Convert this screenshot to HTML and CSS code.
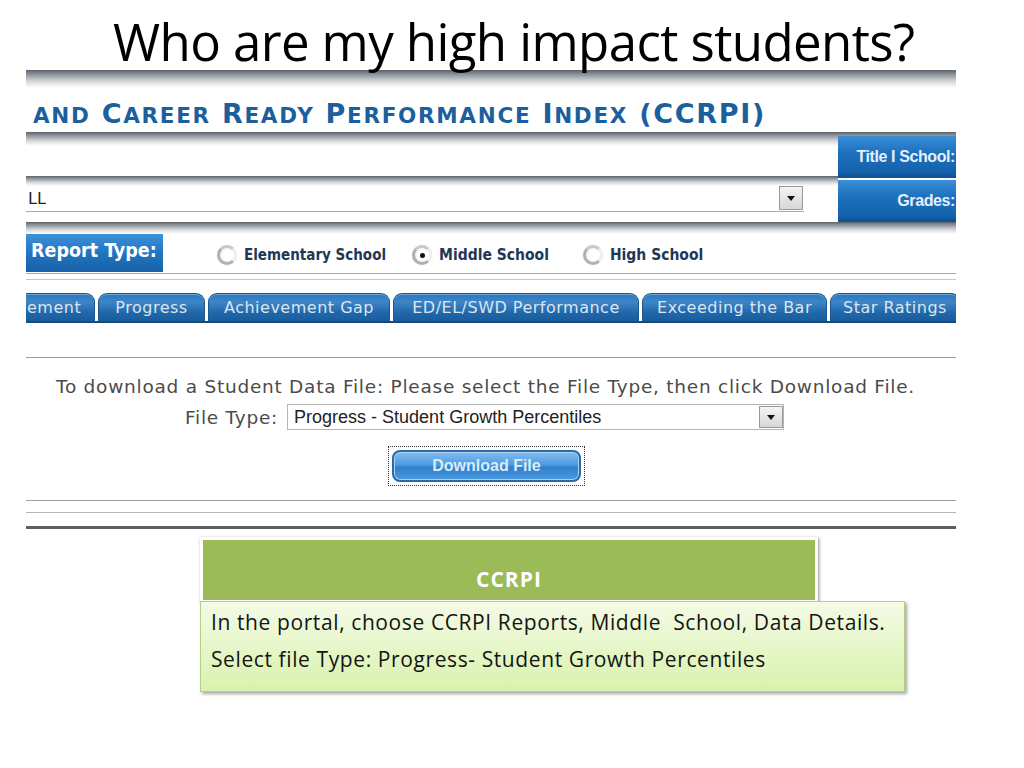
FILE: index.html
```html
<!DOCTYPE html>
<html>
<head>
<meta charset="utf-8">
<link rel="stylesheet" href="styles.css">
</head>
<body>
<h1 class="title">Who are my high impact students?</h1>
<div class="shot">
  <div class="gbar gbar-top"></div>
  <div class="brand"><span class="sc">and</span> C<span class="sc">areer</span> R<span class="sc">eady</span> P<span class="sc">erformance</span> I<span class="sc">ndex</span> (CCRPI)</div>
  <div class="gbar"></div>
  <div class="school">
    <div class="school-left">
      <div class="blank-row"></div>
      <div class="gbar gbar-thin"></div>
      <div class="select-row">
        <span class="sel-text">LL</span>
        <span class="arrow-btn"><span class="tri"></span></span>
      </div>
    </div>
    <div class="school-info">
      <div class="info-cell">Title I School:</div>
      <div class="info-cell">Grades:</div>
    </div>
  </div>
  <div class="gbar gbar-mid"></div>
  <div class="report-row">
    <div class="report-label">Report Type:</div>
    <label class="radio r1"><span class="dot"></span>Elementary School</label>
    <label class="radio r2"><span class="dot on"></span>Middle School</label>
    <label class="radio r3"><span class="dot"></span>High School</label>
  </div>
  <div class="rule"></div>
  <div class="rule rule-2"></div>
  <div class="tabs">
    <div class="tab tab-first">ement</div>
    <div class="tab t2">Progress</div>
    <div class="tab t3">Achievement Gap</div>
    <div class="tab t4">ED/EL/SWD Performance</div>
    <div class="tab t5">Exceeding the Bar</div>
    <div class="tab t6">Star Ratings</div>
  </div>
  <div class="rule rule-3"></div>
  <div class="download">
    <p class="instr">To download a Student Data File: Please select the File Type, then click Download File.</p>
    <div class="ftype">
      <span class="ftype-label">File Type:</span>
      <span class="ftype-select">Progress - Student Growth Percentiles<span class="arrow-btn"><span class="tri"></span></span></span>
    </div>
    <div class="btn-focus"><span class="btn">Download File</span></div>
  </div>
  <div class="rule rule-4"></div>
  <div class="rule rule-5"></div>
  <div class="rule-thick"></div>
</div>
<div class="callout">
  <div class="green">CCRPI</div>
  <div class="note">
    <p>In the portal, choose CCRPI Reports, Middle&nbsp; School, Data Details.</p>
    <p>Select file Type: Progress- Student Growth Percentiles</p>
  </div>
</div>
</body>
</html>
```
FILE: styles.css
```css
html, body { margin: 0; padding: 0; background: #fff; }
body { width: 1024px; height: 768px; overflow: hidden; font-family: "DejaVu Sans", sans-serif; }

.title {
  margin: 0;
  height: 68px;
  padding-left: 113px;
  font-family: "Open Sans", sans-serif;
  font-weight: 400;
  font-size: 51px;
  line-height: 82px;
  letter-spacing: -0.6px;
  color: #000;
  white-space: nowrap;
}

.shot { margin-left: 26px; width: 930px; }

.gbar {
  height: 14px;
  background: linear-gradient(#5b626b 0, #8e949a 25%, #d8dadd 65%, #fff 100%);
}
.gbar-top { margin-top: 2px; height: 18px; }
.gbar-thin { height: 10px; }
.gbar-mid { height: 12px; }

.brand {
  height: 44px;
  padding-left: 7px;
  font-weight: bold;
  font-size: 27px;
  line-height: 52px;
  color: #1c5f9e;
  letter-spacing: 1.7px;
  white-space: nowrap;
}
.sc { text-transform: uppercase; font-size: 21.5px; }

.school { display: flex; height: 88px; margin-top: -12px; }
.school-left { flex: 1; padding-top: 12px; }
.blank-row { height: 30px; }
.select-row {
  height: 25px;
  display: flex;
  align-items: center;
  border-bottom: 1px solid #aaa;
  margin-right: 34px;
  position: relative;
}
.sel-text { padding-left: 2px; font-family: "DejaVu Sans", sans-serif; font-size: 16px; color: #222; }
.select-row .arrow-btn { position: absolute; right: 1px; top: 0; width: 24px; height: 24px; }

.arrow-btn {
  display: inline-flex;
  align-items: center;
  justify-content: center;
  width: 22px;
  height: 22px;
  border: 1px solid #999;
  background: linear-gradient(#f4f4f4, #d7d7d7);
  box-sizing: border-box;
}
.tri { width: 0; height: 0; border-left: 4px solid transparent; border-right: 4px solid transparent; border-top: 5px solid #111; }

.school-info {
  width: 118px;
  margin-top: 2px;
  display: flex;
  flex-direction: column;
  gap: 2px;
}
.info-cell {
  flex: 1;
  background: linear-gradient(#3a8fd8 0, #1d70bd 40%, #1462ab 85%, #0f4f8f 100%);
  color: #e4f0fb;
  font-family: "Liberation Sans Narrow", "Liberation Sans", sans-serif;
  font-weight: bold;
  font-size: 16px;
  display: flex;
  align-items: center;
  justify-content: flex-end;
  white-space: nowrap;
  letter-spacing: -0.4px;
  padding-right: 1px;
}

.report-row { display: flex; align-items: center; height: 38px; }
.report-label {
  width: 137px;
  height: 38px;
  box-sizing: border-box;
  padding-left: 5px;
  background: linear-gradient(#3d92dc, #2274c0 50%, #1761a8);
  color: #fff;
  font-family: "DejaVu Sans Condensed", "DejaVu Sans", sans-serif;
  font-weight: bold;
  font-size: 19.5px;
  line-height: 34px;
  white-space: nowrap;
}
.radio {
  display: flex;
  align-items: center;
  font-family: "DejaVu Sans Condensed", "DejaVu Sans", sans-serif;
  font-weight: bold;
  font-size: 15px;
  color: #1f3754;
  padding-top: 4px;
}
.r1 { margin-left: 54px; }
.r2 { margin-left: 26px; font-size: 15.5px; }
.r3 { margin-left: 34px; font-size: 15.5px; }
.dot {
  width: 20px;
  height: 20px;
  border-radius: 50%;
  margin-right: 7px;
  box-sizing: border-box;
  border: 3px solid #b0b0b0;
  border-right-color: #f0f0f0;
  border-top-color: #c8c8c8;
  background: radial-gradient(circle at 60% 50%, #fff 45%, #e8e8e8 100%);
  box-shadow: 0 0 1px #ccc;
  display: flex; align-items: center; justify-content: center;
}
.dot.on::after { content: ""; width: 5px; height: 5px; border-radius: 50%; background: #111; }

.rule { height: 1px; background: #a9a9a9; margin-top: 1px; }
.rule-2 { margin-top: 5px; background: #c8c8c8; }

.tabs {
  display: flex;
  gap: 3px;
  margin-top: 13px;
  height: 30px;
  border-bottom: 2px solid #164a7c;
  box-sizing: border-box;
  overflow: hidden;
}
.tab {
  flex: none;
  box-sizing: border-box;
  height: 28px;
  border-radius: 9px 9px 0 0;
  border: 1px solid #1b578f;
  border-bottom: 0;
  background: linear-gradient(#2c78bd 0, #3d85c6 30%, #1f67aa 70%, #1a5c9c 100%);
  color: #dbe5ee;
  font-family: "DejaVu Sans", sans-serif;
  font-size: 16px;
  letter-spacing: 0.5px;
  line-height: 28px;
  text-align: center;
  white-space: nowrap;
  box-shadow: inset 0 1px 0 #6aa6dc;
}
.tab-first { width: 69px; border-radius: 0 9px 0 0; text-align: left; padding-left: 1px; border-left: 0; }
.t2 { width: 107px; }
.t3 { width: 182px; }
.t4 { width: 246px; }
.t5 { width: 185px; }
.t6 { width: 130px; }

.rule-3 { margin-top: 34px; background: #999; }

.download { height: 142px; display: flex; flex-direction: column; align-items: flex-start; }
.instr {
  margin: 18px 0 0 30px;
  font-family: "DejaVu Sans", sans-serif;
  font-size: 18.5px;
  color: #4b4b4b;
  letter-spacing: 0.75px;
  white-space: nowrap;
}
.ftype { display: flex; align-items: center; margin-top: 7px; margin-left: 159px; }
.ftype-label { font-family: "DejaVu Sans", sans-serif; font-size: 18.5px; color: #4b4b4b; letter-spacing: 0.75px; }
.ftype-select {
  margin-left: 9px;
  width: 497px;
  height: 26px;
  box-sizing: border-box;
  border: 1px solid #b5b5b5;
  display: flex;
  align-items: center;
  justify-content: space-between;
  padding-left: 6px;
  font-family: "Liberation Sans", Arial, sans-serif;
  font-size: 18px;
  color: #222;
}
.ftype-select .arrow-btn { width: 24px; height: 22px; margin-right: 0; }
.btn-focus {
  margin: 16px 0 0 362px;
  width: 197px;
  height: 40px;
  box-sizing: border-box;
  border: 1px dotted #333;
  padding: 3px;
}
.btn {
  display: block;
  height: 32px;
  box-sizing: border-box;
  border-radius: 8px;
  border: 2px solid #2a6aa8;
  background: linear-gradient(#84bdf0 0, #4d9be0 45%, #2f7fcc 55%, #4b9ae0 100%);
  color: #d8ecfa;
  font-family: "Liberation Sans", Arial, sans-serif;
  font-weight: bold;
  font-size: 16px;
  line-height: 27px;
  text-align: center;
  box-shadow: inset 0 0 0 1px #a9d3f5;
}

.rule-4 { margin-top: 0; background: #a0a0a0; }
.rule-5 { margin-top: 11px; background: #b5b5b5; }
.rule-thick { height: 3px; margin-top: 13px; background: #5e5e5e; }

.callout { margin-left: 200px; margin-top: 8px; position: relative; }
.green {
  width: 618px;
  height: 66px;
  box-sizing: border-box;
  border: 3px solid #fff;
  background: #9bbb59;
  box-shadow: 1px 1px 3px rgba(0,0,0,0.45);
  color: #fff;
  font-family: "Open Sans", sans-serif;
  font-weight: bold;
  font-size: 21px;
  letter-spacing: 1px;
  text-align: center;
  padding-top: 26px;
  line-height: 26px;
}
.note {
  position: relative;
  margin-top: -2px;
  width: 705px;
  height: 91px;
  box-sizing: border-box;
  border: 1px solid #b4cf86;
  background: linear-gradient(#f4fbe6, #d9f2ae);
  box-shadow: 2px 2px 3px rgba(0,0,0,0.35);
  padding: 2px 0 0 10px;
  font-family: "Open Sans", sans-serif;
  font-size: 21px;
  color: #141414;
}
.note p { margin: 0; line-height: 37px; white-space: nowrap; letter-spacing: 0.6px; }
```
